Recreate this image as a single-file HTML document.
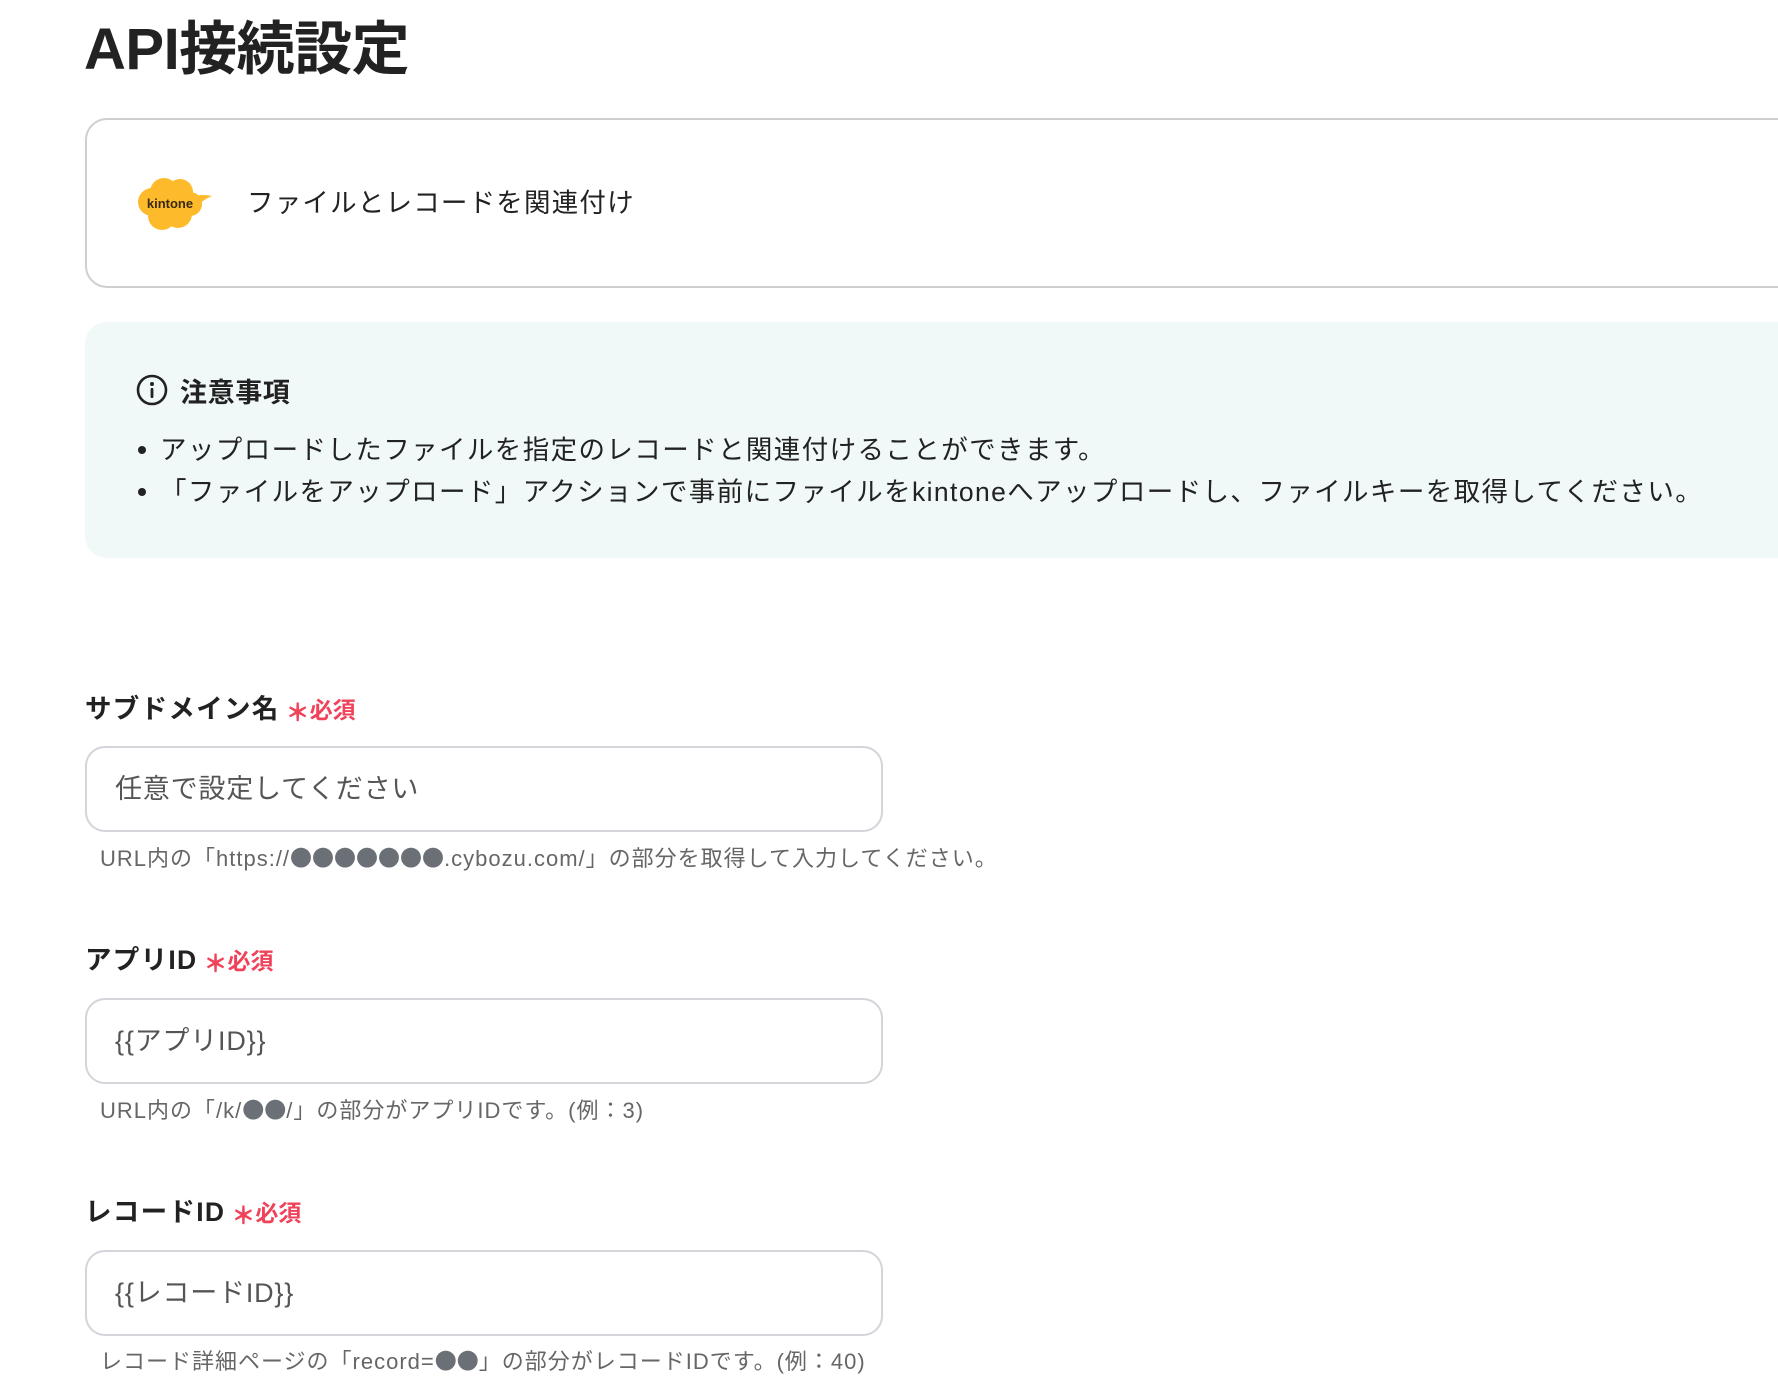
<!DOCTYPE html>
<html><head><meta charset="utf-8"><style>
*{margin:0;padding:0;box-sizing:border-box}
body{width:1778px;height:1396px;background:#fff;position:relative;overflow:hidden;font-family:"Liberation Sans","Noto Sans CJK JP",sans-serif;color:#222}
.a{position:absolute;white-space:nowrap}
.t{left:84px;top:14px;font-size:58px;font-weight:700;letter-spacing:-0.5px;line-height:72px;color:#222}
.card{left:85px;top:118px;width:1760px;height:170px;border:2px solid #cfcfcf;border-radius:22px}
.note{left:85px;top:322px;width:1760px;height:236px;background:#f0f9f8;border-radius:22px}
.lab{font-size:26.5px;font-weight:700;line-height:36px;color:#222;letter-spacing:1.3px}
.req{color:#f0435a;font-size:23px;font-weight:700;margin-left:6px;letter-spacing:0}
.req b{font-family:"Noto Sans CJK JP",sans-serif;font-size:24px;vertical-align:-3px;margin-right:0}
.inp{left:85px;width:798px;height:86px;border:2px solid #d3d5da;border-radius:20px;font-size:27px;color:#555;padding-left:28px;line-height:82px;letter-spacing:0.8px}
.help{left:100px;font-size:22px;color:#666;line-height:30px;letter-spacing:1px}
.help i{font-style:normal;font-family:"Noto Sans CJK JP",sans-serif;font-size:22px;color:#6b6f76;letter-spacing:0}
.li{font-size:26.5px;line-height:40px;color:#222;letter-spacing:1.4px}
.dot{position:absolute;width:8px;height:8px;border-radius:4px;background:#222}
</style></head><body>
<div class="a t">API接続設定</div>
<div class="a card"></div>
<svg class="a" style="left:134px;top:176px" width="80" height="58" viewBox="0 0 80 58">
<g fill="#fdbb2b">
<circle cx="18" cy="26" r="14"/><circle cx="30" cy="16" r="14"/><circle cx="46" cy="16" r="13"/><circle cx="56" cy="28" r="12"/><circle cx="44" cy="38" r="14"/><circle cx="28" cy="40" r="14"/><circle cx="38" cy="27" r="16"/>
<path d="M60 20 Q70 18 78 20 Q68 24 62 32 Z"/>
</g>
<text x="36" y="32" text-anchor="middle" font-family="Liberation Sans,sans-serif" font-weight="700" font-size="13" fill="#3a2a10">kintone</text>
</svg>
<div class="a" style="left:247px;top:184px;font-size:26.5px;line-height:38px;color:#222;letter-spacing:1.2px">ファイルとレコードを関連付け</div>
<div class="a note"></div>
<svg class="a" style="left:136px;top:374px" width="32" height="32" viewBox="0 0 32 32"><circle cx="16" cy="16" r="14" fill="none" stroke="#222" stroke-width="2.6"/><circle cx="16" cy="10" r="2" fill="#222"/><rect x="14.6" y="14" width="2.8" height="10" rx="1" fill="#222"/></svg>
<div class="a" style="left:180px;top:374px;font-size:27px;font-weight:700;line-height:38px;letter-spacing:0.6px">注意事項</div>
<div class="dot" style="left:138px;top:446px"></div>
<div class="a li" style="left:160px;top:430px">アップロードしたファイルを指定のレコードと関連付けることができます。</div>
<div class="dot" style="left:138px;top:488px"></div>
<div class="a li" style="left:160px;top:472px">「ファイルをアップロード」アクションで事前にファイルをkintoneへアップロードし、ファイルキーを取得してください。</div>

<div class="a lab" style="left:85px;top:691px">サブドメイン名<span class="req"><b>＊</b>必須</span></div>
<div class="a inp" style="top:746px">任意で設定してください</div>
<div class="a help" style="top:842px">URL内の「https://<i>●●●●●●●</i>.cybozu.com/」の部分を取得して入力してください。</div>

<div class="a lab" style="left:85px;top:942px">アプリID<span class="req"><b>＊</b>必須</span></div>
<div class="a inp" style="top:998px">{{アプリID}}</div>
<div class="a help" style="top:1094px">URL内の「/k/<i>●●</i>/」の部分がアプリIDです。(例：3)</div>

<div class="a lab" style="left:85px;top:1194px">レコードID<span class="req"><b>＊</b>必須</span></div>
<div class="a inp" style="top:1250px">{{レコードID}}</div>
<div class="a help" style="top:1345px">レコード詳細ページの「record=<i>●●</i>」の部分がレコードIDです。(例：40)</div>
</body></html>
